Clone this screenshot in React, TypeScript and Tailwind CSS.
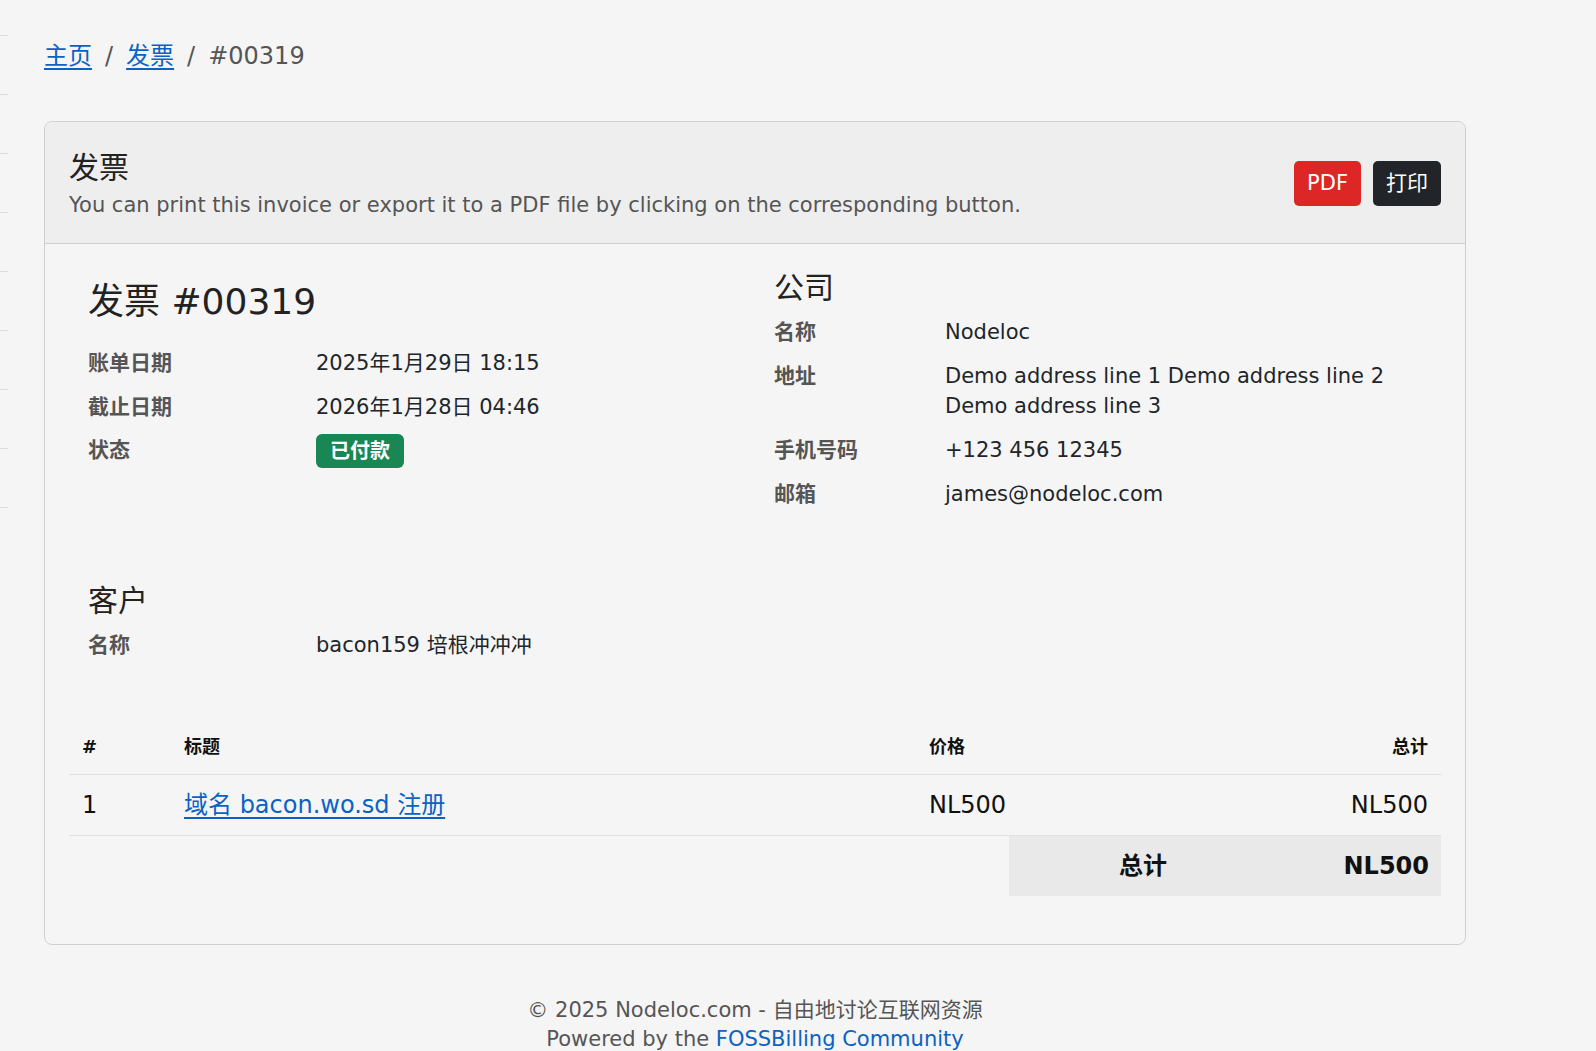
const FONT = "font-['DejaVu_Sans','Noto_Sans_CJK_SC',sans-serif]";

const companyRows = [
  { label: "名称", value: ["Nodeloc"] },
  { label: "地址", value: ["Demo address line 1 Demo address line 2", "Demo address line 3"] },
  { label: "手机号码", value: ["+123 456 12345"] },
  { label: "邮箱", value: ["james@nodeloc.com"] },
];

function Sidebar() {
  // 왼쪽 가장자리에 살짝 보이는 사이드바 줄
  return (
    <div className="w-[8px] shrink-0">
      <div className="h-[36px] border-b border-[#dcdcdc]" />
      {Array.from({ length: 8 }).map((_, i) => (
        <div key={i} className="h-[59px] border-b border-[#dcdcdc]" />
      ))}
    </div>
  );
}

function InfoRow({ label, children, className = "" }: { label: string; children: React.ReactNode; className?: string }) {
  return (
    <div className={`flex text-[21px] leading-[30px] ${className}`}>
      <div className="w-[228px] shrink-0 font-bold text-[#555]">{label}</div>
      <div className="text-[#212529]">{children}</div>
    </div>
  );
}

export default function App() {
  return (
    <div className={`min-h-screen bg-[#f5f5f5] flex ${FONT}`}>
      <Sidebar />

      <main className="pl-[36px]">
        <div className="w-[1422px]">
          {/* breadcrumb */}
          <nav className="pt-[42px] text-[24px] leading-[28px] text-[#555] flex gap-[13px]">
            <a href="#" className="text-[#0b62c4] underline underline-offset-[4px]">主页</a>
            <span>/</span>
            <a href="#" className="text-[#0b62c4] underline underline-offset-[4px]">发票</a>
            <span>/</span>
            <span>#00319</span>
          </nav>

          {/* card */}
          <section className="mt-[51px] border border-[#cfcfcf] rounded-[8px] overflow-hidden">
            <header className="bg-[#eeeeee] border-b border-[#cfcfcf] px-[24px] pt-[28px] pb-[23px] flex items-center justify-between">
              <div>
                <h4 className="text-[30px] leading-[36px] text-[#222]">发票</h4>
                <p className="mt-[4px] text-[21px] leading-[30px] text-[#555]">
                  You can print this invoice or export it to a PDF file by clicking on the corresponding button.
                </p>
              </div>
              <div className="flex gap-[12px] -mt-[3px]">
                <button className="h-[45px] px-[13px] rounded-[5px] bg-[#dd2727] text-white text-[21px]">PDF</button>
                <button className="h-[45px] px-[13px] rounded-[5px] bg-[#212529] text-white text-[21px]">打印</button>
              </div>
            </header>

            <div className="px-[24px] pt-[26px] pb-[48px]">
              <div className="grid grid-cols-2">
                {/* invoice info */}
                <div className="px-[19px]">
                  <h2 className="mt-[10px] text-[36px] leading-[43px] text-[#222]">发票 #00319</h2>
                  <InfoRow label="账单日期" className="mt-[25px]">2025年1月29日 18:15</InfoRow>
                  <InfoRow label="截止日期" className="mt-[14px]">2026年1月28日 04:46</InfoRow>
                  <div className="mt-[12px] flex items-center h-[34px] text-[21px]">
                    <div className="w-[228px] shrink-0 font-bold text-[#555]">状态</div>
                    <span className="h-[34px] px-[14px] rounded-[6px] bg-[#198754] text-white font-bold text-[20px] flex items-center">
                      已付款
                    </span>
                  </div>
                </div>

                {/* company */}
                <div className="px-[19px]">
                  <h4 className="text-[30px] leading-[36px] text-[#222]">公司</h4>
                  {companyRows.map((r, i) => (
                    <div key={r.label} className={`flex text-[21px] leading-[30px] ${i === 0 ? "mt-[11px]" : "mt-[14px]"}`}>
                      <div className="w-[171px] shrink-0 font-bold text-[#555]">{r.label}</div>
                      <div className="text-[#212529]">
                        {r.value.map((v) => (
                          <div key={v}>{v}</div>
                        ))}
                      </div>
                    </div>
                  ))}
                </div>
              </div>

              {/* client */}
              <div className="px-[19px] mt-[74px]">
                <h4 className="text-[30px] leading-[36px] text-[#222]">客户</h4>
                <InfoRow label="名称" className="mt-[11px]">bacon159 培根冲冲冲</InfoRow>
              </div>

              {/* items table */}
              <div className="mt-[58px] text-[#111]">
                <div className="grid grid-cols-[102px_745px_262px_262px] h-[57px] items-center border-b border-[#dee2e6] text-[18px] font-bold">
                  <div className="pl-[13px]">#</div>
                  <div className="pl-[13px]">标题</div>
                  <div className="pl-[13px]">价格</div>
                  <div className="pr-[12px] text-right">总计</div>
                </div>
                <div className="grid grid-cols-[102px_745px_262px_262px] h-[61px] items-center border-b border-[#dee2e6] text-[24px]">
                  <div className="pl-[13px]">1</div>
                  <div className="pl-[13px]">
                    <a href="#" className="text-[#0b62c4] underline underline-offset-[4px]">域名 bacon.wo.sd 注册</a>
                  </div>
                  <div className="pl-[13px]">NL500</div>
                  <div className="pr-[12px] text-right">NL500</div>
                </div>
                <div className="flex justify-end">
                  <div className="w-[432px] h-[60px] bg-[#e9e9e9] grid grid-cols-[268px_164px] items-center text-[24px] font-bold">
                    <div className="text-center">总计</div>
                    <div className="pr-[12px] text-right">NL500</div>
                  </div>
                </div>
              </div>
            </div>
          </section>

          {/* footer */}
          <footer className="mt-[51px] text-center text-[21px] leading-[29px] text-[#555]">
            <div>© 2025 Nodeloc.com - 自由地讨论互联网资源</div>
            <div>
              Powered by the <a href="#" className="text-[#0b62c4]">FOSSBilling Community</a>
            </div>
          </footer>
        </div>
      </main>
    </div>
  );
}
